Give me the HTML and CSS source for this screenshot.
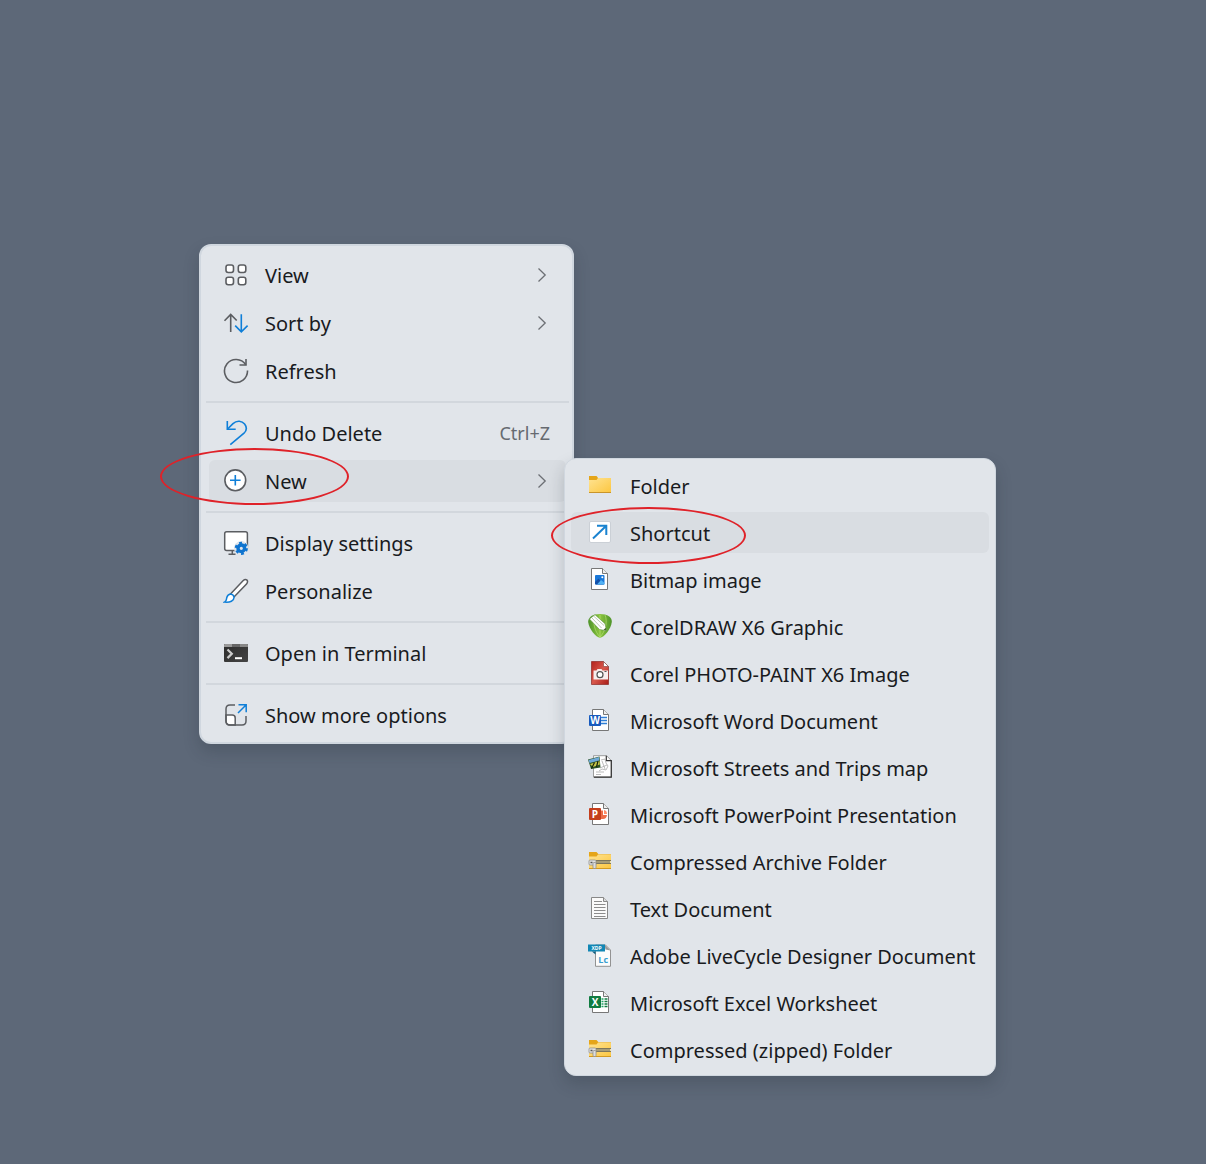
FILE: index.html
```
<!DOCTYPE html>
<html lang="en">
<head>
    <meta charset="UTF-8">
    <meta name="viewport" content="width=device-width, initial-scale=1.0">
    <title>Desktop</title>
    <link rel="stylesheet" href="styles.css">
</head>
<body>
    <!-- shared shapes -->
    <svg class="defs" width="0" height="0" aria-hidden="true">
        <defs>
            <linearGradient id="gold" x1="0" y1="0" x2="1" y2="1">
                <stop offset="0" stop-color="#ffe392"/>
                <stop offset="1" stop-color="#fcc63f"/>
            </linearGradient>
            <linearGradient id="leaf" x1="0" y1="0" x2="1" y2="0">
                <stop offset="0" stop-color="#4d9329"/>
                <stop offset="0.5" stop-color="#8cc63f"/>
                <stop offset="1" stop-color="#4d9329"/>
            </linearGradient>
            <linearGradient id="red" x1="0" y1="0" x2="1" y2="1">
                <stop offset="0" stop-color="#b3221c"/>
                <stop offset="0.5" stop-color="#d8584c"/>
                <stop offset="1" stop-color="#a81c17"/>
            </linearGradient>
            <linearGradient id="dark" x1="0" y1="0" x2="1" y2="1">
                <stop offset="0" stop-color="#2b2b2b"/>
                <stop offset="1" stop-color="#444"/>
            </linearGradient>
        </defs>
        <symbol id="chevron" viewBox="0 0 10 16">
            <path d="M1.5 1.5 8.2 8 1.5 14.5" fill="none" stroke="#6c6f74" stroke-width="1.3"/>
        </symbol>
        <symbol id="page" viewBox="0 0 24 24">
            <path d="M4.5 1.5h11l5 5v16h-16z" fill="#fff" stroke="#777"/>
            <path d="M15.5 1.5v5h5" fill="#eee" stroke="#777"/>
        </symbol>
        <symbol id="zip" viewBox="0 0 24 24">
            <path d="M1 3h7.5l2 2.300H23V9H1z" fill="#e5a519"/>
            <path d="M1 7.5h7.5l1.5-2h13V20H1z" fill="url(#gold)"/>
            <path d="M1 19.5h22" stroke="#d39a20"/>
            <path d="M7 11h16v4H7z" fill="#efe0a8"/>
            <path d="M8 11.500h15M8 14.500h15" stroke="#5f5a48" stroke-width=".8"/>
            <path d="M8.500 13h14" stroke="#5f5a48" stroke-width="2" stroke-dasharray="1 1"/>
            <rect x="1" y="11" width="7" height="5" rx="1" fill="#e2e2e2" stroke="#888" stroke-width=".7"/>
            <path d="M2.5 13.500h2" stroke="#555" stroke-width="1.500"/>
            <rect x="5" y="13.500" width="3" height="6" rx="1" fill="#ddd" stroke="#888" stroke-width=".7"/>
        </symbol>
    </svg>

    <main class="desktop">
        <div class="menu">
            <ul class="menu-list">
                <li>
                    <button type="button" class="item">
                        <svg class="icon" viewBox="0 0 26 26" fill="#fff" stroke="#5b5d61" stroke-width="1.6">
                            <rect x="3" y="3" width="7.5" height="7.5" rx="2.2"/>
                            <rect x="15.3" y="3" width="7.5" height="7.5" rx="2.2"/>
                            <rect x="3" y="15.3" width="7.5" height="7.5" rx="2.2"/>
                            <rect x="15.3" y="15.3" width="7.5" height="7.5" rx="2.2"/>
                        </svg>
                        <span class="label">View</span>
                        <svg class="chevron"><use href="#chevron"/></svg>
                    </button>
                </li>
                <li>
                    <button type="button" class="item">
                        <svg class="icon" viewBox="0 0 26 26" fill="none" stroke-width="1.6">
                            <path d="M7.7 22V4.5M1.500 10.7l6.200-6.200 6 6" stroke="#5b5d61"/>
                            <path d="M18.3 4.300v17.500M12.200 15.600l6.100 6.200 6.300-6.200" stroke="#0f7fd8"/>
                        </svg>
                        <span class="label">Sort by</span>
                        <svg class="chevron"><use href="#chevron"/></svg>
                    </button>
                </li>
                <li>
                    <button type="button" class="item">
                        <svg class="icon" viewBox="0 0 26 26" fill="none" stroke="#5b5d61" stroke-width="1.6">
                            <path d="M24.5 12.500A11.500 11.500 0 1 1 22.700 6.800"/>
                            <path d="M23 1v6h-6.500"/>
                        </svg>
                        <span class="label">Refresh</span>
                    </button>
                </li>
                <li class="separator"></li>
                <li>
                    <button type="button" class="item">
                        <svg class="icon" viewBox="0 0 26 26" fill="none" stroke="#0f7fd8" stroke-width="1.6">
                            <path d="M4.300 1v8.300h8.400"/>
                            <path d="M4.600 9 10 3.600C14 0 19 1 21.600 4c2.300 3 2 6.600-.6 9.200L7.300 24.700"/>
                        </svg>
                        <span class="label">Undo Delete</span>
                        <span class="shortcut">Ctrl+Z</span>
                    </button>
                </li>
                <li>
                    <button type="button" class="item active">
                        <svg class="icon" viewBox="0 0 26 26" fill="none">
                            <circle cx="12.300" cy="12.300" r="10.400" fill="#fff" stroke="#5b5d61" stroke-width="1.6"/>
                            <path d="M12.300 7v10.600M7 12.300h10.600" stroke="#0f7fd8" stroke-width="1.6"/>
                        </svg>
                        <span class="label">New</span>
                        <svg class="chevron"><use href="#chevron"/></svg>
                    </button>
                    <span class="mark mark-new"></span>
                </li>
                <li class="separator"></li>
                <li>
                    <button type="button" class="item">
                        <svg class="icon" viewBox="0 0 26 26" fill="none">
                            <rect x="1.700" y="1.700" width="22.700" height="18.800" rx="2" fill="#fff" stroke="#5b5d61" stroke-width="1.5"/>
                            <path d="M9.300 20.500v4M5.500 24.300h7" stroke="#5b5d61" stroke-width="1.5"/>
                            <circle cx="18.300" cy="18.300" r="7.300" fill="#e1e5ea"/>
                            <circle cx="18.300" cy="18.300" r="3.300" stroke="#0f74cf" stroke-width="3.400"/>
                            <circle cx="18.300" cy="18.300" r="5.300" stroke="#0f74cf" stroke-width="2.600" stroke-dasharray="2.800 2.750"/>
                        </svg>
                        <span class="label">Display settings</span>
                    </button>
                </li>
                <li>
                    <button type="button" class="item">
                        <svg class="icon" viewBox="0 0 26 26" fill="#fff" stroke-width="1.5">
                            <path d="M7.500 16 20 2.700c1.400-1.300 3-1.500 4-.6.900 1 .6 2.400-.5 4L11 19z" stroke="#5b5d61"/>
                            <path d="M7.500 16c2 .2 3.300 1.500 3.500 3.200.2 3.500-4 5.600-9.500 4.900 2.300-1 1.700-2.400 2.300-4.600.5-2 2-3.300 3.700-3.500z" stroke="#0f7fd8"/>
                        </svg>
                        <span class="label">Personalize</span>
                    </button>
                </li>
                <li class="separator"></li>
                <li>
                    <button type="button" class="item">
                        <svg class="icon" viewBox="0 0 26 26" fill="none">
                            <rect x="1" y="4" width="24" height="18" rx="1" fill="url(#dark)"/>
                            <path d="M1 7V5q0-1 1-1h7v3z" fill="#999"/>
                            <path d="M9 4h8v3H9z" fill="#666"/>
                            <path d="M17 4h7q1 0 1 1v2h-8z" fill="#888"/>
                            <path d="m4.500 9.500 4.300 4.300-4.300 4.300" stroke="#ccc" stroke-width="2.200"/>
                            <path d="M12 18.200h7" stroke="#fff" stroke-width="2"/>
                        </svg>
                        <span class="label">Open in Terminal</span>
                    </button>
                </li>
                <li class="separator"></li>
                <li>
                    <button type="button" class="item">
                        <svg class="icon" viewBox="0 0 26 26" fill="none" stroke="#5b5d61" stroke-width="1.5">
                            <path d="M3 13h6.200q3 0 3 3v7H7q-4 0-4-4z" fill="#fff"/>
                            <path d="M12 3H7Q3 3 3 7v12q0 4 4 4h12q4 0 4-4v-5"/>
                            <path d="M15 11l8-8M15.500 2.800h7.700v7.500" stroke="#0f7fd8"/>
                        </svg>
                        <span class="label">Show more options</span>
                    </button>
                </li>
            </ul>

            <ul class="menu-list submenu">
                <li>
                    <button type="button" class="item">
                        <svg class="icon" viewBox="0 0 24 24">
                            <path d="M1 3h7.500l1.500 1.700V8H1z" fill="#e5a519"/>
                            <path d="M1 7h7.500l1.500-2h13v15H1z" fill="url(#gold)"/>
                            <path d="M1 19.500h22" stroke="#c9952b"/>
                        </svg>
                        <span class="label">Folder</span>
                    </button>
                </li>
                <li>
                    <button type="button" class="item active">
                        <svg class="icon" viewBox="0 0 24 24" fill="none">
                            <rect x="1.500" y="1.500" width="21" height="21" rx="1.500" fill="#fff" stroke="#c3c8cf" stroke-width=".8"/>
                            <path d="M5 18.500 18 6M9 5.700h9.300V15" stroke="#1a83d0" stroke-width="2"/>
                        </svg>
                        <span class="label">Shortcut</span>
                    </button>
                    <span class="mark mark-shortcut"></span>
                </li>
                <li>
                    <button type="button" class="item">
                        <svg class="icon" viewBox="0 0 24 24">
                            <path d="M3.500 1.500h11l5 5v16h-16z" fill="#fff" stroke="#777"/>
                            <path d="M14.500 1.500v5h5" fill="#eee" stroke="#777"/>
                            <rect x="7" y="8" width="9.500" height="9.500" rx="1" fill="#1b78d8"/>
                            <path d="m7 15 3.500-3.500 5.500 6H8q-1 0-1-1z" fill="#1551a8"/>
                            <path d="m9 17.500 4-4.500 3.500 3v1.500z" fill="#52b3f5"/>
                            <circle cx="14.300" cy="10.300" r="1" fill="#fff"/>
                        </svg>
                        <span class="label">Bitmap image</span>
                    </button>
                </li>
                <li>
                    <button type="button" class="item">
                        <svg class="icon" viewBox="0 0 24 24">
                            <path d="M7 .5q5-1 10 0c4 1 7 3.500 6.800 7.500C23 15 16 23.700 12 23.700S1 15 .2 8C.2 4 3 1.500 7 .5z" fill="url(#leaf)"/>
                            <path d="M12 1v22M7 1c-3 7 0 17 5 22M17 1c3 7 0 17-5 22" fill="none" stroke="#b5dd72" stroke-width=".7"/>
                            <path d="M1.500 5 7 .7l10 9 1.500 7-7-1.200z" fill="#fff" stroke="#5f8f44" stroke-width=".6"/>
                            <path d="m3.500 3.500 10 10.500M5.500 2l10.500 9.500" stroke="#8da57d" stroke-width=".6"/>
                            <path d="m15.500 15.700 3 .8-.6-2.700z" fill="#47682e"/>
                        </svg>
                        <span class="label">CorelDRAW X6 Graphic</span>
                    </button>
                </li>
                <li>
                    <button type="button" class="item">
                        <svg class="icon" viewBox="0 0 24 24">
                            <path d="M3.500 .5h12l5 5v18h-17z" fill="url(#red)" stroke="#8d2a25" stroke-width=".7"/>
                            <path d="M15.500 .5v5h5z" fill="#fff" stroke="#8d4a45" stroke-width=".7"/>
                            <path d="M5.500 9.500h3l1-1.500h4l1 1.500H20v9H5.500z" fill="#f8eeee"/>
                            <circle cx="12" cy="13.700" r="3" fill="#fff" stroke="#555" stroke-width="1.200"/>
                            <path d="M16.500 10.500h2" stroke="#555"/>
                        </svg>
                        <span class="label">Corel PHOTO-PAINT X6 Image</span>
                    </button>
                </li>
                <li>
                    <button type="button" class="item">
                        <svg class="icon" viewBox="0 0 24 24">
                            <use href="#page"/>
                            <path d="M13 9.500h6M13 12.500h6M13 15.500h6" stroke="#2f7fd6" stroke-width="1.300"/>
                            <rect x="1" y="7" width="12" height="11" rx="1" fill="#185abd"/>
                            <text class="glyph" x="7" y="16">W</text>
                        </svg>
                        <span class="label">Microsoft Word Document</span>
                    </button>
                </li>
                <li>
                    <button type="button" class="item">
                        <svg class="icon" viewBox="0 0 24 24">
                            <path d="M5.500 .7h13l4.800 4.800v16.700H5.500z" fill="#fff" stroke="#888" stroke-width=".8"/>
                            <path d="M18.300 .7v5h5v16.500H6" fill="none" stroke="#333" stroke-width="1.200"/>
                            <path d="m13 5 4-1 1 4 2 3-2 4-4-1-3 2M14 6l3 8M12 13l7-3M8 17h8M8 19.500h5" fill="none" stroke="#aaa" stroke-width=".8"/>
                            <path d="M0 4.500 11.500 1.500l1 11L3 14z" fill="#2c5425"/>
                            <path d="M.5 5 11 2l.3 3.500L1.500 8z" fill="#6fa9d8"/>
                            <path d="m2 9 9.500-3 .3 3.500L5 12z" fill="#c9c648"/>
                            <path d="m3.500 13.500 3-6M8.500 12l1.500-6" stroke="#13230f" stroke-width="1.200"/>
                        </svg>
                        <span class="label">Microsoft Streets and Trips map</span>
                    </button>
                </li>
                <li>
                    <button type="button" class="item">
                        <svg class="icon" viewBox="0 0 24 24">
                            <use href="#page"/>
                            <path d="M13 8.500h2V13h4q-.5 4-4 4h-2z" fill="#ed6c47"/>
                            <path d="M16 8q3 .5 3 4h-3z" fill="#ff8f6b"/>
                            <rect x="1" y="6" width="12" height="12" rx="1" fill="#c43e1c"/>
                            <text class="glyph" x="7" y="16">P</text>
                        </svg>
                        <span class="label">Microsoft PowerPoint Presentation</span>
                    </button>
                </li>
                <li>
                    <button type="button" class="item">
                        <svg class="icon"><use href="#zip"/></svg>
                        <span class="label">Compressed Archive Folder</span>
                    </button>
                </li>
                <li>
                    <button type="button" class="item">
                        <svg class="icon" viewBox="0 0 24 24">
                            <path d="M3.500 1.500h12l4 4v17h-16z" fill="#fafafa" stroke="#888"/>
                            <path d="M15.500 1.500v4h4" fill="#ddd" stroke="#888"/>
                            <path d="M6 5.500h8M6 8.500h11.500M6 11.500h11.500M6 14.500h11.500M6 17.500h11.500M6 20.500h11.500" stroke="#8c8c8c"/>
                        </svg>
                        <span class="label">Text Document</span>
                    </button>
                </li>
                <li>
                    <button type="button" class="item">
                        <svg class="icon" viewBox="0 0 24 24">
                            <path d="M7.500 2h10l5 5v16.300h-15z" fill="#fcfcfc" stroke="#888" stroke-width=".9"/>
                            <path d="m16.500 1.500 6 6-5-1z" fill="#999"/>
                            <path d="M0 1.500h17v7H0z" fill="#1287b5"/>
                            <path d="M4 8.500h3.500v3z" fill="#0b5d80"/>
                            <text class="glyph-tiny" x="8.500" y="7">XDP</text>
                            <text class="glyph-lc" x="15.200" y="20">Lc</text>
                        </svg>
                        <span class="label">Adobe LiveCycle Designer Document</span>
                    </button>
                </li>
                <li>
                    <button type="button" class="item">
                        <svg class="icon" viewBox="0 0 24 24">
                            <use href="#page"/>
                            <path d="M13.500 9h2M13.500 11.500h2M13.500 14h2M13.500 16.500h2" stroke="#21a366" stroke-width="1.600"/>
                            <path d="M16.500 9h3M16.500 11.500h3M16.500 14h3M16.500 16.500h3" stroke="#107c41" stroke-width="1.600"/>
                            <rect x="1" y="6" width="12" height="12" rx="1" fill="#107c41"/>
                            <text class="glyph" x="7" y="16">X</text>
                        </svg>
                        <span class="label">Microsoft Excel Worksheet</span>
                    </button>
                </li>
                <li>
                    <button type="button" class="item">
                        <svg class="icon"><use href="#zip"/></svg>
                        <span class="label">Compressed (zipped) Folder</span>
                    </button>
                </li>
            </ul>
        </div>
    </main>
</body>
</html>
```
FILE: styles.css
```
body {
    margin: 0;
    background-color: #5d6878;
    font-family: 'Noto Sans', 'Open Sans', sans-serif;
    color: #191b1e;
}
.defs {
    position: absolute;
}
.desktop {
    box-sizing: border-box;
    min-height: 100vh;
    padding: 244px 199px 0;
}
.menu {
    position: relative;
    width: 375px;
}
.menu-list {
    box-sizing: border-box;
    margin: 0;
    padding: 5px 3px 3px 5px;
    list-style: none;
    background-color: #e1e5ea;
    border: 2px solid #d0d7df;
    border-radius: 12px;
    box-shadow: 0 8px 16px rgba(30, 40, 50, 0.22);
}
.menu-list li {
    position: relative;
    padding: 3px;
}
.menu-list .separator {
    height: 2px;
    margin: 6px 0;
    padding: 0;
    background-color: #d2d7dd;
}
.item {
    display: flex;
    align-items: center;
    box-sizing: border-box;
    width: 100%;
    height: 42px;
    padding: 0 16px 0 14px;
    border: none;
    border-radius: 6px;
    background: none;
    font-family: inherit;
    font-size: 20px;
    line-height: 28px;
    color: inherit;
    text-align: left;
    white-space: nowrap;
}
.item:hover,
.item.active {
    background-color: #d9dde2;
}
.icon {
    flex: none;
    width: 26px;
    height: 26px;
    margin-right: 16px;
}
.label {
    flex: 1;
    padding-top: 2px;
}
.shortcut {
    font-size: 18px;
    color: #666a70;
}
.chevron {
    width: 10px;
    height: 16px;
    margin-right: 3px;
}

/* "New" submenu, opens over the main menu */
.submenu {
    position: absolute;
    top: 214px;
    left: 365px;
    width: 432px;
    padding: 3px 3px 2px;
    border-width: 1px;
}
.submenu .item {
    height: 41px;
    padding-left: 17px;
}
.submenu .icon {
    width: 24px;
    height: 24px;
    margin-right: 18px;
    margin-bottom: 2px;
}

/* red ovals */
.mark {
    position: absolute;
    z-index: 1;
    box-sizing: border-box;
    height: 57px;
    border: 2px solid #df2229;
    border-radius: 50%;
    pointer-events: none;
}
.mark-new {
    top: -9px;
    left: -46px;
    width: 189px;
}
.mark-shortcut {
    top: -2px;
    left: -17px;
    width: 195px;
}

/* letters inside the file icons */
.glyph,
.glyph-tiny,
.glyph-lc {
    font-family: 'Open Sans', sans-serif;
    font-weight: 700;
    text-anchor: middle;
}
.glyph {
    font-size: 10px;
    fill: #fff;
}
.glyph-tiny {
    font-size: 5px;
    fill: #fff;
}
.glyph-lc {
    font-size: 9px;
    fill: #3a9fd0;
}
```
